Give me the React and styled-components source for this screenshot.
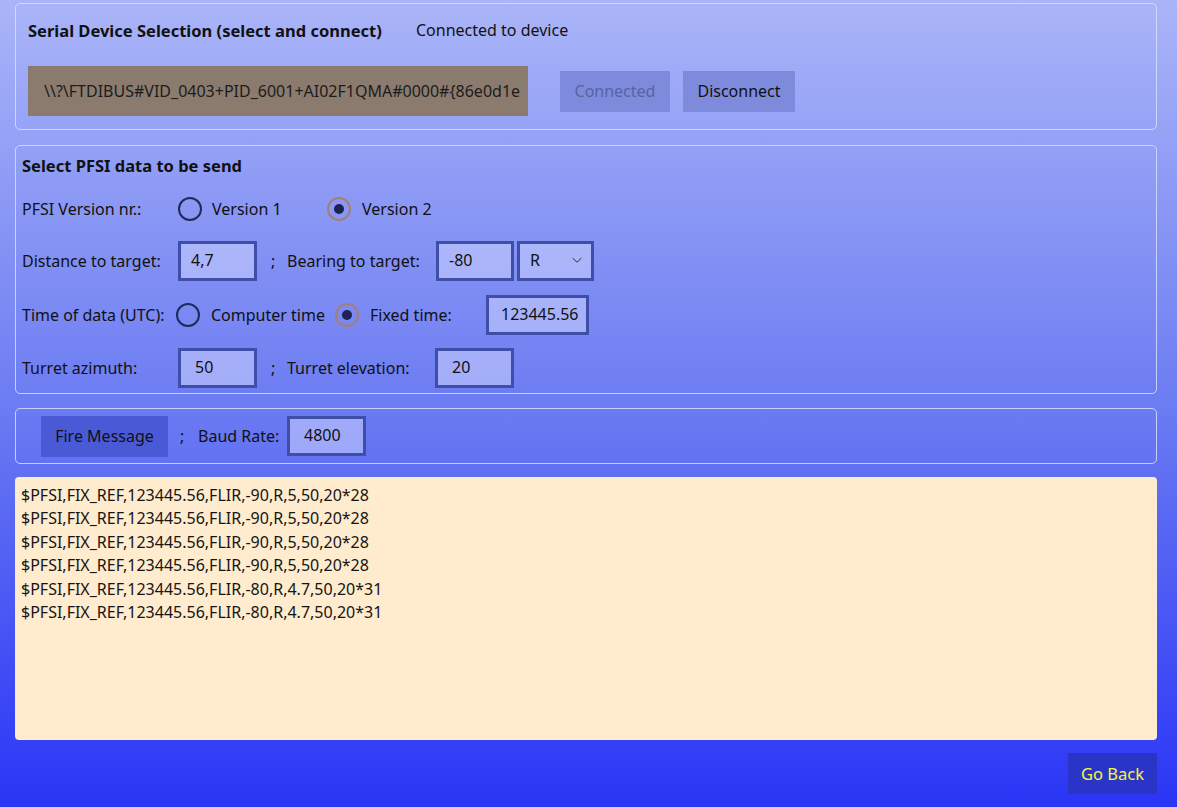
import { styled, createGlobalStyle } from "styled-components";

const GlobalStyle = createGlobalStyle`
  html, body {
    margin: 0;
    padding: 0;
  }
  body {
    font-family: "Noto Sans", "Open Sans", sans-serif;
    font-size: 16px;
    color: #111;
  }
`;

const Page = styled.div`
  width: 1177px;
  height: 807px;
  box-sizing: border-box;
  padding: 3px 20px 0 15px;
  background: linear-gradient(180deg, #aab5f8 0%, #6c7cf2 50%, #2a35f6 100%);
  display: flex;
  flex-direction: column;
  overflow: hidden;
`;

const Panel = styled.section`
  box-sizing: border-box;
  width: 1142px;
  height: ${(p) => p.$h}px;
  margin-top: ${(p) => p.$mt || 0}px;
  border: 1px solid rgba(215, 222, 255, 0.85);
  border-radius: 5px;
  padding: ${(p) => p.$pad};
  display: flex;
  flex-direction: column;
`;

const Row = styled.div`
  display: flex;
  align-items: center;
  height: ${(p) => p.$h}px;
  margin-top: ${(p) => p.$mt || 0}px;
  white-space: nowrap;
`;

const Title = styled.div`
  font-weight: 700;
  font-size: 16.5px;
  width: ${(p) => (p.$w ? `${p.$w}px` : "auto")};
`;

const Text = styled.span`
  display: inline-block;
  flex-shrink: 0;
  width: ${(p) => (p.$w ? `${p.$w}px` : "auto")};
  margin-left: ${(p) => p.$ml || 0}px;
  color: ${(p) => p.$color || "#111"};
`;

const DeviceField = styled.div`
  box-sizing: border-box;
  width: 500px;
  height: 50px;
  background: #8b7b6f;
  padding: 0 0 0 16px;
  display: flex;
  align-items: center;
  overflow: hidden;
  white-space: nowrap;
  color: #1c1c1c;
`;

const Button = styled.button`
  box-sizing: border-box;
  height: 41px;
  width: ${(p) => p.$w}px;
  margin-left: ${(p) => p.$ml || 0}px;
  border: none;
  padding: 0;
  font-family: inherit;
  font-size: ${(p) => p.$fs || 16}px;
  background: ${(p) => p.$bg};
  color: ${(p) => p.$color || "#111"};
`;

const Input = styled.div`
  box-sizing: border-box;
  flex-shrink: 0;
  width: ${(p) => p.$w}px;
  height: 40px;
  margin-left: ${(p) => p.$ml || 0}px;
  border: 3px solid #3f4ea6;
  background: rgba(205, 212, 255, 0.55);
  padding: 0 0 3px ${(p) => p.$pl || 10}px;
  display: flex;
  align-items: center;
  color: #111;
`;

const Combo = styled(Input)`
  justify-content: space-between;
  padding-right: 8px;
`;

const Option = styled.span`
  display: inline-flex;
  align-items: center;
  flex-shrink: 0;
  width: ${(p) => p.$w}px;
`;

const RadioCircle = styled.span`
  box-sizing: border-box;
  width: 24px;
  height: 24px;
  border-radius: 50%;
  border: 2px solid ${(p) => (p.$on ? "#a47f78" : "#1f2a55")};
  display: flex;
  align-items: center;
  justify-content: center;
  flex-shrink: 0;
  &::after {
    content: "";
    display: ${(p) => (p.$on ? "block" : "none")};
    width: 10px;
    height: 10px;
    border-radius: 50%;
    background: #1c2350;
  }
`;

const Radio = ({ on, w, label, gap = 10 }) => (
  <Option $w={w}>
    <RadioCircle $on={on} />
    <Text $ml={gap}>{label}</Text>
  </Option>
);

const Log = styled.div`
  box-sizing: border-box;
  width: 1142px;
  height: 263px;
  margin-top: 13px;
  background: #ffebcd;
  border-radius: 4px;
  padding: 7px 6px;
  line-height: 23.4px;
  color: #151515;
`;

const Footer = styled.div`
  display: flex;
  justify-content: flex-end;
  width: 1142px;
  margin-top: 13px;
`;

const Chevron = () => (
  <svg width="12" height="8" viewBox="0 0 12 8">
    <path d="M1.5 2 L6 6.2 L10.5 2" fill="none" stroke="#333" strokeWidth="1" />
  </svg>
);

const lines = [
  "$PFSI,FIX_REF,123445.56,FLIR,-90,R,5,50,20*28",
  "$PFSI,FIX_REF,123445.56,FLIR,-90,R,5,50,20*28",
  "$PFSI,FIX_REF,123445.56,FLIR,-90,R,5,50,20*28",
  "$PFSI,FIX_REF,123445.56,FLIR,-90,R,5,50,20*28",
  "$PFSI,FIX_REF,123445.56,FLIR,-80,R,4.7,50,20*31",
  "$PFSI,FIX_REF,123445.56,FLIR,-80,R,4.7,50,20*31",
];

export default function App() {
  return (
    <>
      <GlobalStyle />
      <Page>
        <Panel $h={127} $pad="13px 12px 0 12px">
          <Row $h={26}>
            <Title $w={388}>Serial Device Selection (select and connect)</Title>
            <Text>Connected to device</Text>
          </Row>
          <Row $h={50} $mt={23}>
            <DeviceField>
              \\?\FTDIBUS#VID_0403+PID_6001+AI02F1QMA#0000#{"{"}86e0d1e
            </DeviceField>
            <Button $w={110} $ml={32} $bg="#7e8bdd" $color="#56649f">
              Connected
            </Button>
            <Button $w={112} $ml={13} $bg="#7e8bdd">
              Disconnect
            </Button>
          </Row>
        </Panel>

        <Panel $h={249} $mt={15} $pad="6px 6px 0 6px">
          <Row $h={26}>
            <Title>Select PFSI data to be send</Title>
          </Row>
          <Row $h={30} $mt={16}>
            <Text $w={156}>PFSI Version nr.:</Text>
            <Radio w={149} label="Version 1" />
            <Radio on w={120} label="Version 2" gap={11} />
          </Row>
          <Row $h={40} $mt={17}>
            <Text $w={156}>Distance to target:</Text>
            <Input $w={79}>4,7</Input>
            <Text $w={16} $ml={14}>;</Text>
            <Text $w={149}>Bearing to target:</Text>
            <Input $w={78}>-80</Input>
            <Combo $w={77} $ml={3}>
              R
              <Chevron />
            </Combo>
          </Row>
          <Row $h={40} $mt={14}>
            <Text $w={154}>Time of data (UTC):</Text>
            <Radio w={159} label="Computer time" gap={11} />
            <Radio on w={151} label="Fixed time:" gap={11} />
            <Input $w={103} $pl={12}>123445.56</Input>
          </Row>
          <Row $h={40} $mt={13}>
            <Text $w={156}>Turret azimuth:</Text>
            <Input $w={79} $pl={14}>50</Input>
            <Text $w={16} $ml={14}>;</Text>
            <Text $w={148}>Turret elevation:</Text>
            <Input $w={79} $pl={14}>20</Input>
          </Row>
        </Panel>

        <Panel $h={56} $mt={14} $pad="0 0 0 25px">
          <Row $h={54}>
            <Button $w={127} $bg="#4a5ad6">
              Fire Message
            </Button>
            <Text $w={18} $ml={12}>;</Text>
            <Text $w={89}>Baud Rate:</Text>
            <Input $w={79} $pl={14}>4800</Input>
          </Row>
        </Panel>

        <Log>
          {lines.map((l, i) => (
            <div key={i}>{l}</div>
          ))}
        </Log>

        <Footer>
          <Button $w={89} $fs={16.5} $bg="#2a35c8" $color="#f7f73c">
            Go Back
          </Button>
        </Footer>
      </Page>
    </>
  );
}
